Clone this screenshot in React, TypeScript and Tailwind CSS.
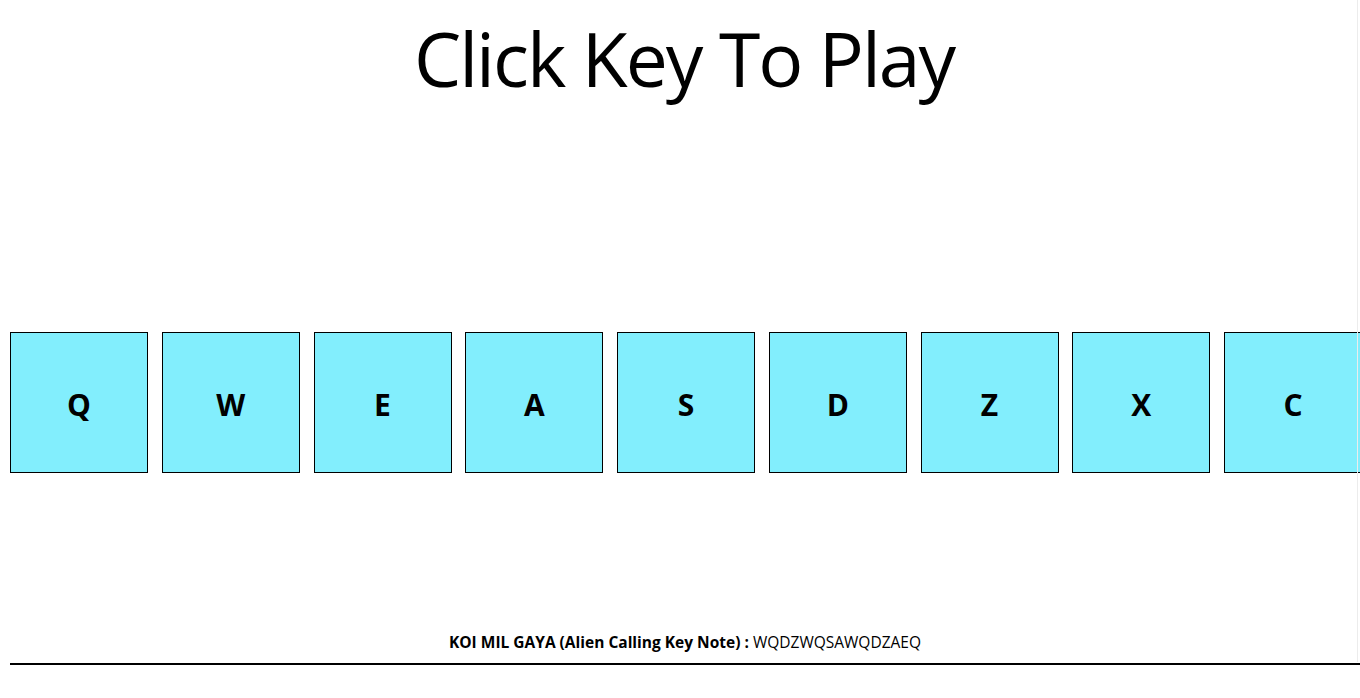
const keys: string[] = ["Q", "W", "E", "A", "S", "D", "Z", "X", "C"];

export default function App(): JSX.Element {
  return (
    <div
      className="relative w-[1360px] h-[698px] overflow-hidden bg-white text-black"
      style={{ fontFamily: '"Open Sans", "Noto Sans", sans-serif' }}
    >
      {/* Title */}
      <h1 className="text-center text-[75px] font-normal leading-none pt-[21px] pl-[8px] tracking-[-2px]">
        Click Key To Play
      </h1>

      {/* Keys */}
      <div className="flex gap-[13.75px] pl-[10px] mt-[236px]">
        {keys.map((k) => (
          <div
            key={k}
            className="shrink-0 w-[138px] h-[141px] border border-black bg-[#82eefd] flex items-center justify-center text-[30px] font-bold pt-[4px]"
          >
            {k}
          </div>
        ))}
      </div>

      {/* Footer */}
      <p className="text-center text-[15.5px] mt-[158px] pl-[10px]">
        <span className="font-bold">KOI MIL GAYA (Alien Calling Key Note) : </span>
        WQDZWQSAWQDZAEQ
      </p>
      <div className="ml-[10px] mt-[9px] h-[2px] bg-black" />

      <div className="absolute top-0 left-[1357px] w-px h-[662px] bg-[#ececec]" />
    </div>
  );
}
